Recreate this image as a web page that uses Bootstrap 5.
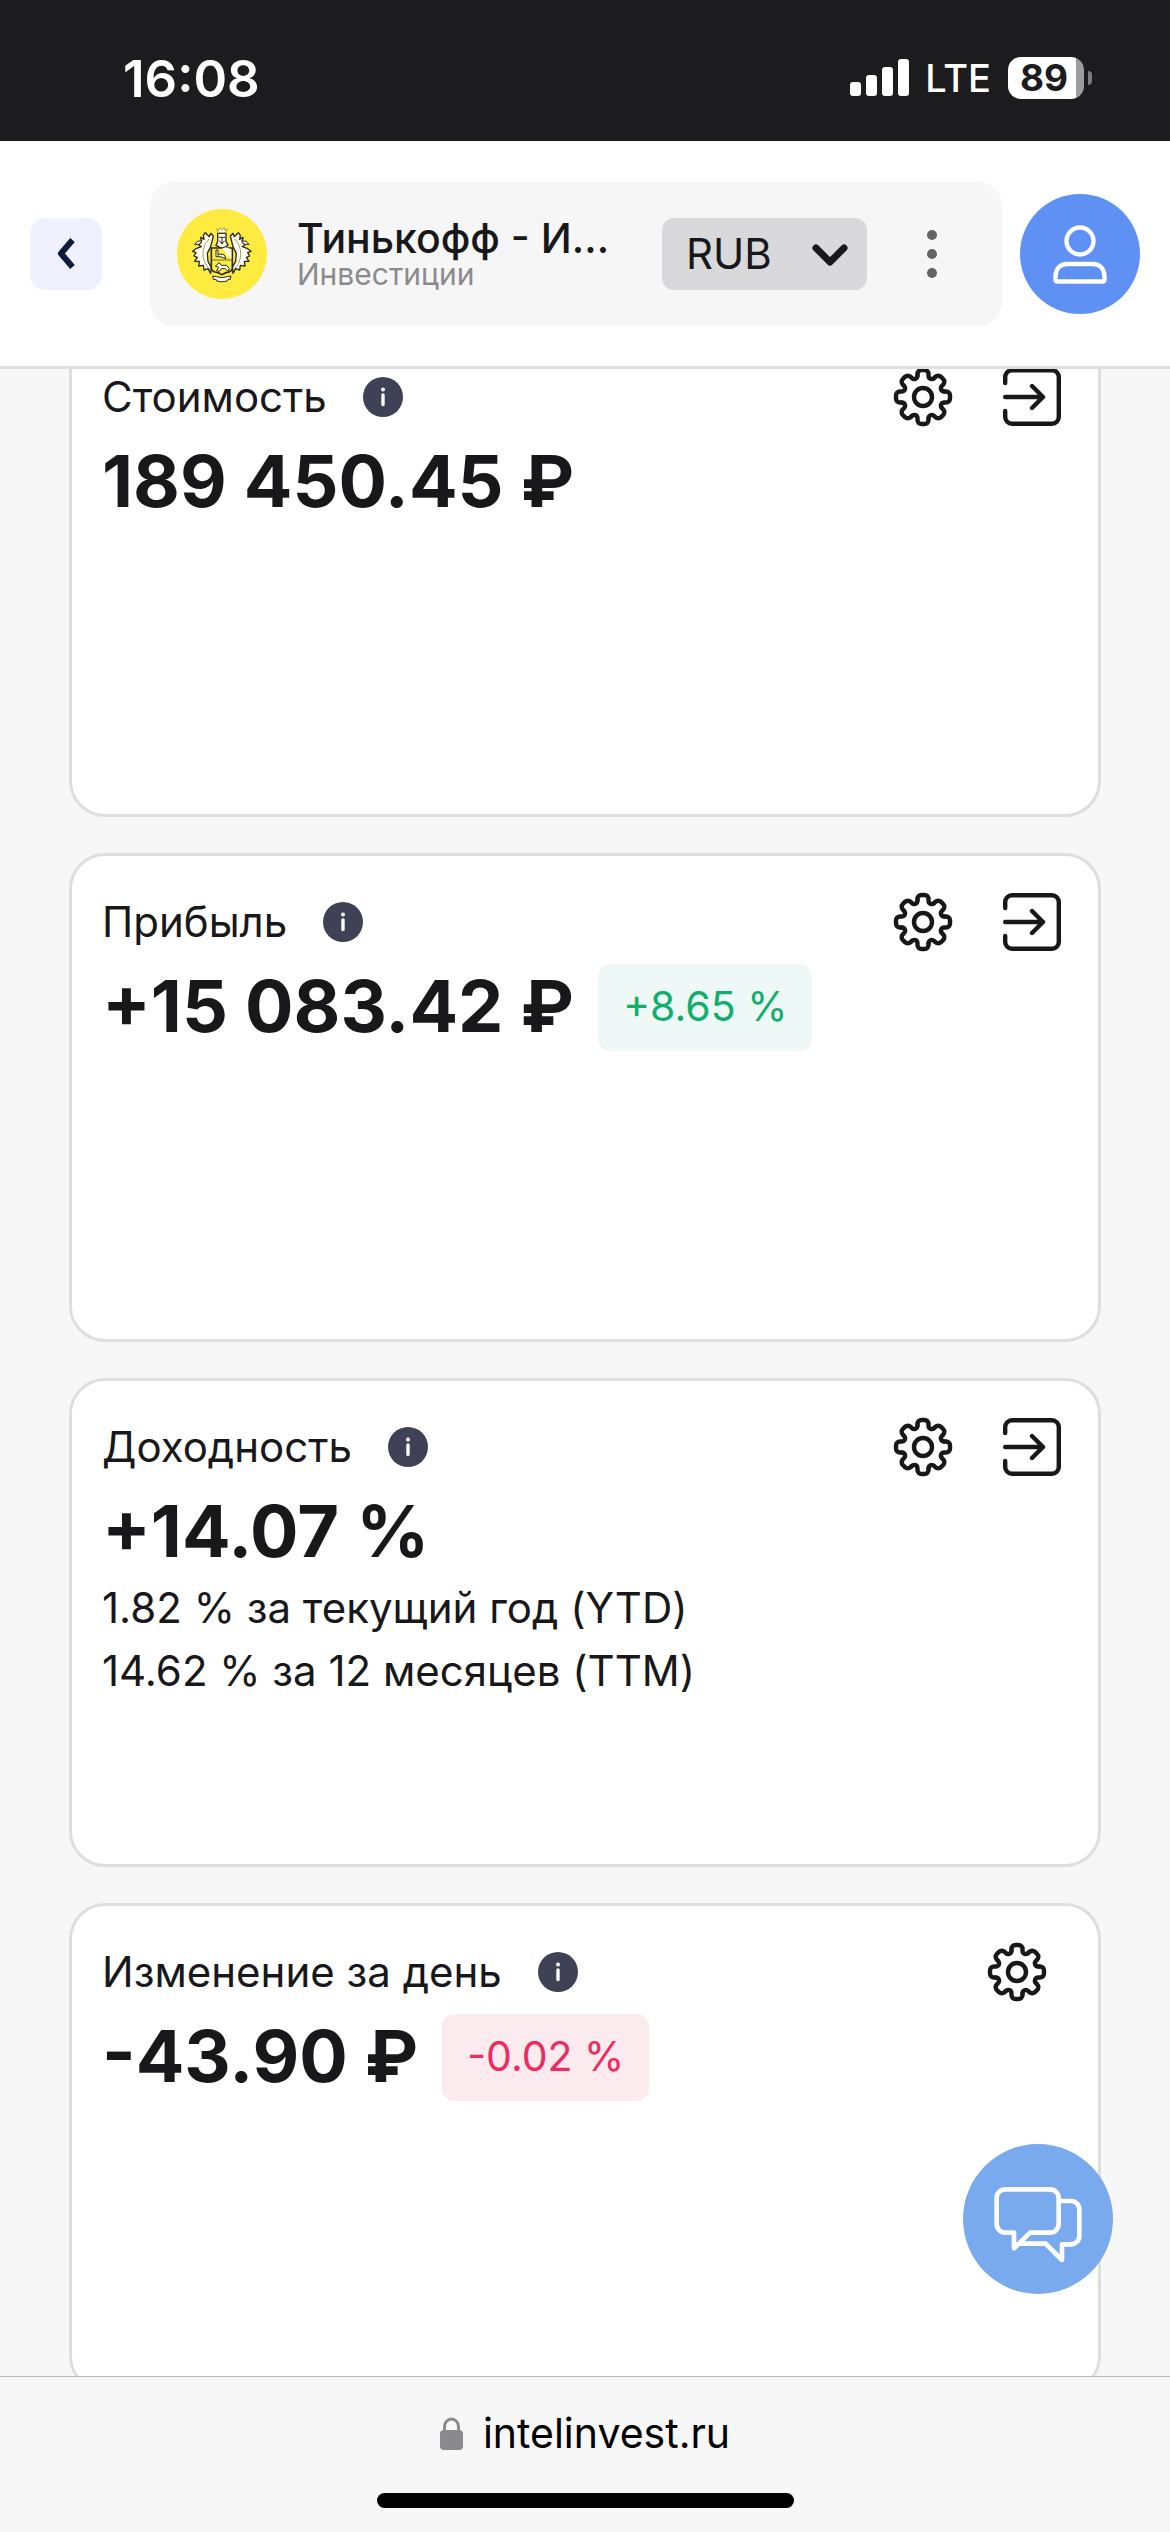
<!DOCTYPE html>
<html lang="ru">
<head>
<meta charset="utf-8">
<meta name="viewport" content="width=device-width, initial-scale=1">
<title>Intelinvest</title>
<link rel="stylesheet" href="https://cdn.jsdelivr.net/npm/bootstrap@5.3.0/dist/css/bootstrap.min.css">
<style>
  body { font-family: Inter, "Noto Sans", sans-serif; background: #f7f7f7; color: #18181a; font-size: 42px; line-height: 63px; }
  svg { display: block; flex: none; }
  .btn { --bs-btn-border-width: 0; --bs-btn-padding-x: 0; --bs-btn-padding-y: 0; flex: none; }

  .status-bar { background: #1c1c1e; height: 141px; padding: 15px 78px 0 123px; }
  .clock { font-size: 51px; font-weight: 600; }
  .carrier { font-size: 38px; font-weight: 500; margin: 0 17px 0 15px; }
  .battery-box { width: 76px; height: 42px; border-radius: 13px; background: linear-gradient(90deg, #fff 89%, #9c9c9e 89%); color: #1c1c1e; font-size: 37px; line-height: 42px; font-weight: 700; padding-right: 4px; }
  .battery-tip { width: 4px; height: 14px; border-radius: 0 4px 4px 0; background: #7c7c7e; }

  .top-bar { height: 228px; padding: 0 30px; border-bottom: 3px solid #dedede; }
  .back-btn { width: 72px; height: 72px; border-radius: 15px; background: #f0f1fe; }
  .portfolio { height: 144px; margin: 0 18px 0 48px; padding: 0 30px 0 27px; border-radius: 24px; background: #f6f6f6; min-width: 0; }
  .portfolio-text { margin-left: 30px; min-width: 0; }
  .portfolio-name { font-size: 41px; font-weight: 500; line-height: 41px; }
  .portfolio-kind { font-size: 30px; line-height: 30px; color: #8b8b8d; }
  .currency { width: 205px; height: 72px; flex: none; }
  .currency .form-select { height: 72px; padding: 0 60px 0 24px; border: 0; border-radius: 12px; background: #d9d9dc; color: #18181a; font-size: 42px; line-height: 72px; }
  .currency svg { position: absolute; right: 19px; top: 26px; pointer-events: none; }
  .dots-btn { width: 80px; height: 72px; margin-left: 25px; }
  .avatar { width: 120px; height: 120px; background: #5e91f3; }

  .feed { padding: 0 69px; min-height: 0; }
  /* the list is scrolled a little under the top bar */
  .scrolled { margin-top: -41px; gap: 36px; }
  .metric { height: 489px; flex: none; border: 3px solid #dedede; border-radius: 36px; padding: 36px 37px 36px 30px; background: #fff; color: inherit; }
  .metric-head { height: 60px; margin-bottom: 12px; gap: 36px; }
  .metric-title { font-size: 42px; font-weight: 400; line-height: 60px; }
  .metric-value { font-size: 72px; font-weight: 700; line-height: 84px; padding-bottom: 3px; }
  .gear-btn { padding: 0 14px 0 12px; }
  .change { font-size: 41px; line-height: 84px; padding: 0 25px 3px; border-radius: 12px; }
  .change-up { background: #eef9f7; color: #10ae6a; }
  .change-down { background: #fbeaee; color: #ee2a60; }

  .chat-btn { position: fixed; right: 57px; bottom: 238px; width: 150px; height: 150px; background: #7aaaee; }

  .address-bar { height: 156px; border-top: 1px solid #b9b9bb; background: #f7f7f7; padding: 25px 0 24px; }
  .address-bar a { color: #000; font-size: 41px; }
  .address-bar svg { margin-right: 20px; }
  .home-line { width: 417px; height: 15px; background: #000; }
</style>
</head>
<body class="vh-100 d-flex flex-column overflow-hidden">

<svg width="0" height="0" class="position-absolute" aria-hidden="true">
  <defs>
    <path id="tooth" d="M-5.5-21.5V-23a4 4 0 0 1 4-4h3a4 4 0 0 1 4 4V-21.5C5.5-18 9-16.8 11.3-19.1"/>
    <symbol id="gear" viewBox="-30 -30 60 60">
      <g fill="none" stroke="#18181a" stroke-width="4.4" stroke-linecap="round">
        <circle r="9"/>
        <use href="#tooth"/><use href="#tooth" transform="rotate(45)"/><use href="#tooth" transform="rotate(90)"/><use href="#tooth" transform="rotate(135)"/>
        <use href="#tooth" transform="rotate(180)"/><use href="#tooth" transform="rotate(225)"/><use href="#tooth" transform="rotate(270)"/><use href="#tooth" transform="rotate(315)"/>
      </g>
    </symbol>
    <symbol id="enter" viewBox="0 0 58 58">
      <path d="M2.200 15V9a6.800 6.800 0 0 1 6.800-6.800H49a6.800 6.800 0 0 1 6.800 6.800V49a6.800 6.800 0 0 1-6.800 6.800H9a6.800 6.800 0 0 1-6.800-6.800V43M2.200 29H40M29 18 40 29 29 40" fill="none" stroke="#18181a" stroke-width="4.4" stroke-linecap="round" stroke-linejoin="round"/>
    </symbol>
    <symbol id="info" viewBox="0 0 40 40">
      <circle cx="20" cy="20" r="20" fill="#3f4257"/>
      <circle cx="20" cy="12.5" r="2" fill="#fff"/>
      <path d="M20 18V27.500" stroke="#fff" stroke-width="3.4" stroke-linecap="round"/>
    </symbol>
  </defs>
</svg>

<div class="status-bar d-flex justify-content-between align-items-center text-white flex-shrink-0">
  <span class="clock">16:08</span>
  <div class="d-flex align-items-center">
    <svg width="60" height="38" viewBox="0 0 60 38" fill="#fff" aria-hidden="true">
      <rect x="0" y="23" width="11" height="14" rx="3"/><rect x="16" y="16" width="11" height="21" rx="3"/><rect x="32" y="8" width="11" height="29" rx="3"/><rect x="48" y="0" width="11" height="37" rx="3"/>
    </svg>
    <span class="carrier">LTE</span>
    <span class="battery-box text-center">89</span>
    <span class="battery-tip ms-1"></span>
  </div>
</div>

<header class="top-bar d-flex align-items-center bg-white flex-shrink-0">
  <button type="button" class="btn back-btn d-flex align-items-center justify-content-center" aria-label="Назад">
    <svg width="22" height="34" viewBox="0 0 22 34"><path d="M17.500 3 6 16.500 17.500 30" fill="none" stroke="#0c1c3c" stroke-width="6" stroke-linejoin="round"/></svg>
  </button>

  <div class="portfolio d-flex align-items-center flex-grow-1">
    <svg width="90" height="90" viewBox="51 57 270 270" aria-hidden="true">
      <circle cx="186" cy="192" r="135" fill="#fdec3f"/>
      <g id="crest-side">
        <path d="M152 170 160 138 152 130 148 140 136 128 130 136 132 148 122 142 124 156 116 164 124 170 108 176 98 184 108 188 102 198 112 202 104 214 118 214 116 228 130 226 132 240 144 236 152 250 154 232 144 214 142 190Z" fill="#fffef2" stroke="#2d2b1d" stroke-width="4" stroke-linejoin="round"/>
        <path d="M104 164 112 154 126 152 120 162Z" fill="#fffef2" stroke="#2d2b1d" stroke-width="3"/>
        <path d="M148 146C134 160 126 180 130 202S142 228 150 240" fill="none" stroke="#6c682f" stroke-width="2"/>
      </g>
      <use href="#crest-side" transform="matrix(-1 0 0 1 371 0)"/>
      <path d="M173 130H198V154L204 166 186 176 168 166 173 154Z" fill="#fffef2" stroke="#2d2b1d" stroke-width="4"/>
      <path d="M176 142H195M186 142V160M178 152 186 162 194 152" fill="none" stroke="#2d2b1d" stroke-width="3"/>
      <path d="M170 116 176 122 180 112 186 120 192 112 195 122 202 116 198 128H174Z" fill="#fff" stroke="#b8a13c" stroke-width="3"/>
      <path d="M154 174H217V236Q214 246 198 248L186 254 174 248Q156 246 154 236Z" fill="#fdec3f" stroke="#2d2b1d" stroke-width="5"/>
      <path d="M156 210H215" stroke="#6c682f" stroke-width="3"/>
      <path d="M186 176 196 172 214 178V206L204 196 194 184Z" fill="#fffef2"/>
      <path d="M168 180V200H180L198 206 192 194 180 192 174 196V180Z" fill="#fffef2" stroke="#2d2b1d" stroke-width="3"/>
      <path d="M170 242 176 232 166 228 178 218 184 226 200 226 208 236 204 244 196 236 184 236 178 244Z" fill="#fffef2" stroke="#2d2b1d" stroke-width="3"/>
      <path d="M158 258 170 260Q186 266 202 260L213 258 211 268 204 268 202 273Q186 278 170 273L168 268 160 268Z" fill="#fffef2" stroke="#2d2b1d" stroke-width="3"/>
    </svg>
    <div class="portfolio-text flex-grow-1 text-nowrap">
      <div class="portfolio-name">Тинькофф - И...</div>
      <div class="portfolio-kind">Инвестиции</div>
    </div>
    <div class="currency position-relative">
      <select class="form-select" aria-label="Валюта"><option>RUB</option><option>USD</option><option>EUR</option></select>
      <svg width="36" height="22" viewBox="0 0 36 22" aria-hidden="true"><path d="M4 4 18 18 32 4" fill="none" stroke="#18181a" stroke-width="7" stroke-linecap="round" stroke-linejoin="round"/></svg>
    </div>
    <button type="button" class="btn dots-btn d-flex align-items-center justify-content-center" aria-label="Меню">
      <svg width="10" height="48" viewBox="0 0 10 48" fill="#646466"><circle cx="5" cy="5" r="5"/><circle cx="5" cy="24" r="5"/><circle cx="5" cy="43" r="5"/></svg>
    </button>
  </div>

  <button type="button" class="btn avatar rounded-circle d-flex align-items-center justify-content-center" aria-label="Профиль">
    <svg width="54" height="60" viewBox="0 0 54 60" fill="none" stroke="#fff" stroke-width="4.4" stroke-linejoin="round"><circle cx="27" cy="17" r="13.5"/><path d="M2.5 55.5V53C2.5 45 7 40 14 40H40C47 40 51.500 45 51.500 53V55.500Q51.500 57.500 49.500 57.500H4.500Q2.500 57.500 2.500 55.500Z"/></svg>
  </button>
</header>

<main class="feed flex-grow-1 overflow-hidden">
  <div class="scrolled d-flex flex-column">

    <section class="metric card">
      <div class="metric-head d-flex align-items-center">
        <h2 class="metric-title m-0">Стоимость</h2>
        <button type="button" class="btn" aria-label="Подсказка"><svg width="40" height="40"><use href="#info"/></svg></button>
        <button type="button" class="btn gear-btn ms-auto" aria-label="Настройки"><svg width="60" height="60"><use href="#gear"/></svg></button>
        <button type="button" class="btn" aria-label="Перейти"><svg width="58" height="58"><use href="#enter"/></svg></button>
      </div>
      <div class="metric-value">189 450.45 ₽</div>
    </section>

    <section class="metric card">
      <div class="metric-head d-flex align-items-center">
        <h2 class="metric-title m-0">Прибыль</h2>
        <button type="button" class="btn" aria-label="Подсказка"><svg width="40" height="40"><use href="#info"/></svg></button>
        <button type="button" class="btn gear-btn ms-auto" aria-label="Настройки"><svg width="60" height="60"><use href="#gear"/></svg></button>
        <button type="button" class="btn" aria-label="Перейти"><svg width="58" height="58"><use href="#enter"/></svg></button>
      </div>
      <div class="d-flex align-items-center gap-4">
        <span class="metric-value">+15 083.42 ₽</span>
        <span class="change change-up">+8.65 %</span>
      </div>
    </section>

    <section class="metric card">
      <div class="metric-head d-flex align-items-center">
        <h2 class="metric-title m-0">Доходность</h2>
        <button type="button" class="btn" aria-label="Подсказка"><svg width="40" height="40"><use href="#info"/></svg></button>
        <button type="button" class="btn gear-btn ms-auto" aria-label="Настройки"><svg width="60" height="60"><use href="#gear"/></svg></button>
        <button type="button" class="btn" aria-label="Перейти"><svg width="58" height="58"><use href="#enter"/></svg></button>
      </div>
      <div class="metric-value">+14.07 %</div>
      <div>1.82 % за текущий год (YTD)</div>
      <div>14.62 % за 12 месяцев (TTM)</div>
    </section>

    <section class="metric card">
      <div class="metric-head d-flex align-items-center">
        <h2 class="metric-title m-0">Изменение за день</h2>
        <button type="button" class="btn" aria-label="Подсказка"><svg width="40" height="40"><use href="#info"/></svg></button>
        <button type="button" class="btn gear-btn ms-auto" aria-label="Настройки"><svg width="60" height="60"><use href="#gear"/></svg></button>
      </div>
      <div class="d-flex align-items-center gap-4">
        <span class="metric-value">-43.90 ₽</span>
        <span class="change change-down">-0.02 %</span>
      </div>
    </section>

  </div>
</main>

<footer class="address-bar d-flex flex-column align-items-center justify-content-between flex-shrink-0">
  <div class="d-flex align-items-center">
    <svg width="23" height="33" viewBox="0 0 23 33" aria-hidden="true"><path d="M4.500 16V9.500a7 7.500 0 0 1 14 0V16" fill="none" stroke="#8a8a8d" stroke-width="3"/><rect y="13" width="23" height="20" rx="4" fill="#8a8a8d"/></svg>
    <a href="#" class="text-decoration-none">intelinvest.ru</a>
  </div>
  <div class="home-line rounded-pill"></div>
</footer>

<button type="button" class="btn chat-btn rounded-circle" aria-label="Чат">
  <svg width="150" height="150" viewBox="69 672 450 450" fill="none" stroke="#fff" stroke-width="14" stroke-linejoin="round"><path d="M196 938H222V985L270 938H330A26 26 0 0 0 356 912V834A26 26 0 0 0 330 808H196A26 26 0 0 0 170 834V912A26 26 0 0 0 196 938Z"/><path d="M357 843H393A25 25 0 0 1 418 868V948A25 25 0 0 1 393 973H366V1020L317 971H238"/></svg>
</button>

<script src="https://cdn.jsdelivr.net/npm/bootstrap@5.3.0/dist/js/bootstrap.bundle.min.js"></script>
</body>
</html>
